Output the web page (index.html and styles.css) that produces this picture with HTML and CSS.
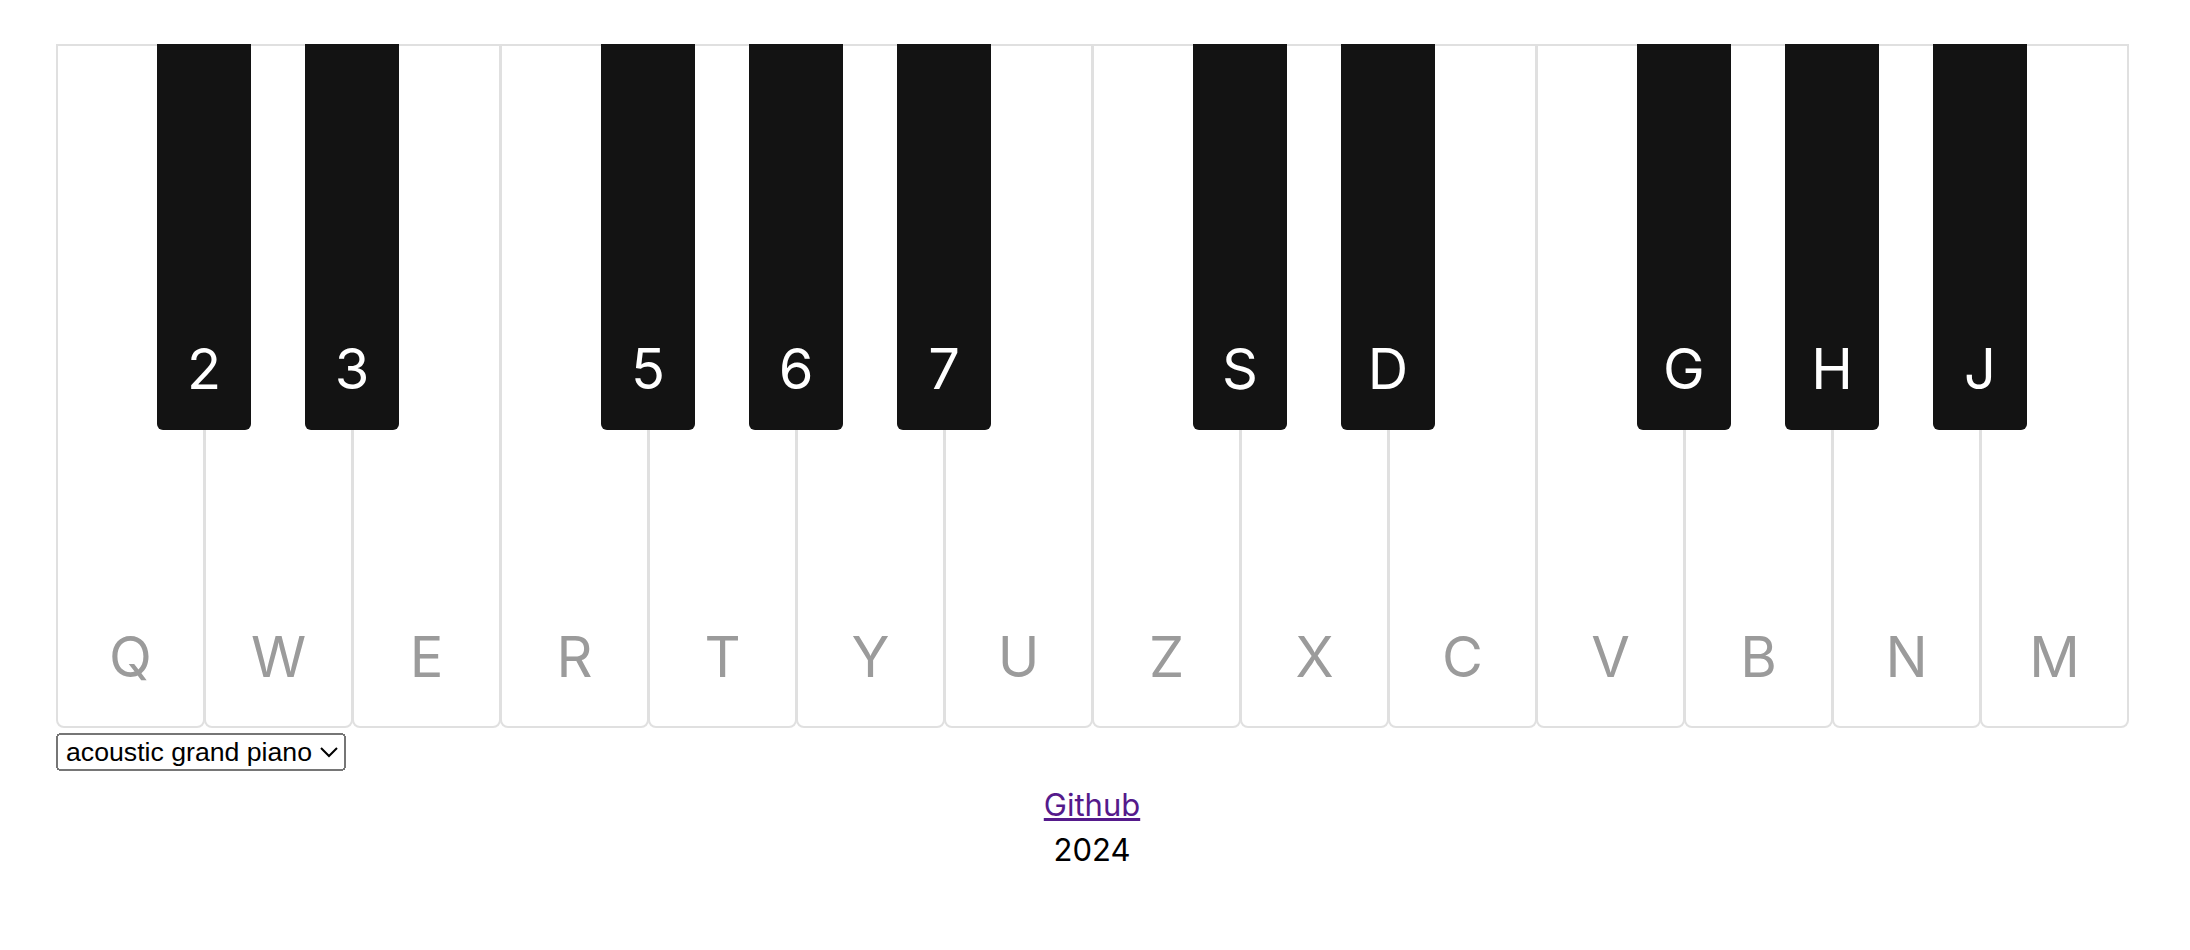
FILE: index.html
```html
<!DOCTYPE html>
<html lang="en">
<head>
<meta charset="utf-8">
<title>Piano</title>
<link rel="stylesheet" href="styles.css">
</head>
<body>
<main class="app">
  <div class="piano">
    <div class="white"><span class="label">Q</span><div class="black"><span class="blabel">2</span></div></div>
    <div class="white"><span class="label">W</span><div class="black"><span class="blabel">3</span></div></div>
    <div class="white"><span class="label">E</span></div>
    <div class="white"><span class="label">R</span><div class="black"><span class="blabel">5</span></div></div>
    <div class="white"><span class="label">T</span><div class="black"><span class="blabel">6</span></div></div>
    <div class="white"><span class="label">Y</span><div class="black"><span class="blabel">7</span></div></div>
    <div class="white"><span class="label">U</span></div>
    <div class="white"><span class="label">Z</span><div class="black"><span class="blabel">S</span></div></div>
    <div class="white"><span class="label">X</span><div class="black"><span class="blabel">D</span></div></div>
    <div class="white"><span class="label">C</span></div>
    <div class="white"><span class="label">V</span><div class="black"><span class="blabel">G</span></div></div>
    <div class="white"><span class="label">B</span><div class="black"><span class="blabel">H</span></div></div>
    <div class="white"><span class="label">N</span><div class="black"><span class="blabel">J</span></div></div>
    <div class="white"><span class="label">M</span></div>
  </div>
  <div class="controls">
    <select class="instrument">
      <option>acoustic grand piano</option>
      <option>electric piano</option>
      <option>church organ</option>
    </select>
  </div>
  <footer class="footer">
    <a class="link" href="#">Github</a>
    <div class="year">2024</div>
  </footer>
</main>
</body>
</html>
```
FILE: styles.css
```css
html, body {
  margin: 0;
  padding: 0;
  background: #ffffff;
}

body {
  font-family: Inter, "Noto Sans", sans-serif;
  color: #000;
}

.app {
  width: 2073px;
  padding: 44px 0 0 56px;
}

.piano {
  display: flex;
  height: 684px;
}

.white {
  position: relative;
  box-sizing: border-box;
  flex: 0 0 149px;
  width: 149px;
  height: 684px;
  margin-right: -1px;
  border: 2px solid rgba(0, 0, 0, 0.12);
  border-radius: 0 0 8px 8px;
  background: #ffffff;
  display: flex;
  flex-direction: column;
  justify-content: flex-end;
  align-items: center;
  padding-bottom: 41px;
}

.label {
  font-size: 56px;
  line-height: 1;
  color: #9b9b9b;
}

.black {
  position: absolute;
  z-index: 1;
  top: -2px;
  left: 99px;
  width: 94px;
  height: 386px;
  box-sizing: border-box;
  background: #131313;
  border-radius: 0 0 6px 6px;
  display: flex;
  flex-direction: column;
  justify-content: flex-end;
  align-items: center;
  padding-bottom: 33px;
}

.blabel {
  font-size: 56px;
  line-height: 1;
  color: #ffffff;
}

.controls {
  padding-top: 5px;
  display: flex;
}

.instrument {
  zoom: 2;
  font-family: "Liberation Sans", Arial, sans-serif;
  font-size: 13.333px;
  color: #000;
}

.footer {
  width: 2072px;
  margin-top: 11px;
  text-align: center;
  font-size: 31px;
  line-height: 45px;
}

.link {
  color: #551a8b;
  text-decoration: underline;
}

.year {
  color: #000;
}
```
